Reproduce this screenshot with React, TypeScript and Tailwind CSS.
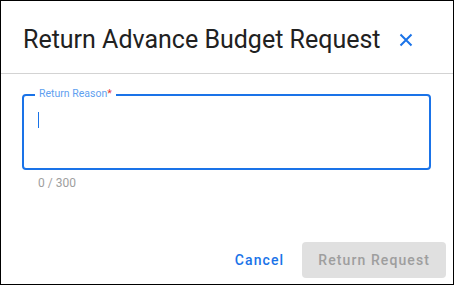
export default function App() {
  return (
    <div
      className="flex h-[285px] w-[454px] flex-col border border-black bg-white"
      style={{ fontFamily: "Roboto, 'Liberation Sans', sans-serif" }}
    >
      {/* Header */}
      <div className="flex h-[73px] shrink-0 items-center gap-[18px] border-b border-[#d3d3d3] pl-[22px] pt-[6px]">
        <h2 className="text-[25px] font-normal text-[#212121]">
          Return Advance Budget Request
        </h2>
        <button className="flex h-[14px] w-[14px] items-center justify-center text-[#1a73e8]">
          <svg viewBox="0 0 14 14" className="h-[14px] w-[14px]">
            <path d="M1.5 1.5 L12.5 12.5 M12.5 1.5 L1.5 12.5" stroke="currentColor" strokeWidth="2" fill="none" />
          </svg>
        </button>
      </div>

      {/* Body */}
      <div className="flex flex-1 flex-col px-[21px] pt-[20px]">
        <div className="relative h-[76px] w-[409px] rounded-[4px] border-2 border-[#1a73e8]">
          <label className="absolute -top-[9px] left-[11px] bg-white px-[4px] text-[10.5px] leading-[14px] text-[#5f9ff0]">
            Return Reason<span className="text-[#e53935]">*</span>
          </label>
          <div className="ml-[14px] mt-[16px] h-[16px] w-px bg-[#1a73e8]" />
        </div>
        <p className="mt-[6px] pl-[16px] text-[12px] leading-[14px] text-[#9e9e9e]">0 / 300</p>
      </div>

      {/* Footer */}
      <div className="flex shrink-0 items-center justify-end gap-[18px] pb-[6px] pr-[7px]">
        <button className="text-[14px] font-medium tracking-[1.1px] text-[#1a73e8]">Cancel</button>
        <button
          disabled
          className="h-[36px] rounded-[4px] bg-[#e0e0e0] px-[16px] text-[14px] font-medium tracking-[1.1px] text-[#9e9e9e]"
        >
          Return Request
        </button>
      </div>
    </div>
  );
}
